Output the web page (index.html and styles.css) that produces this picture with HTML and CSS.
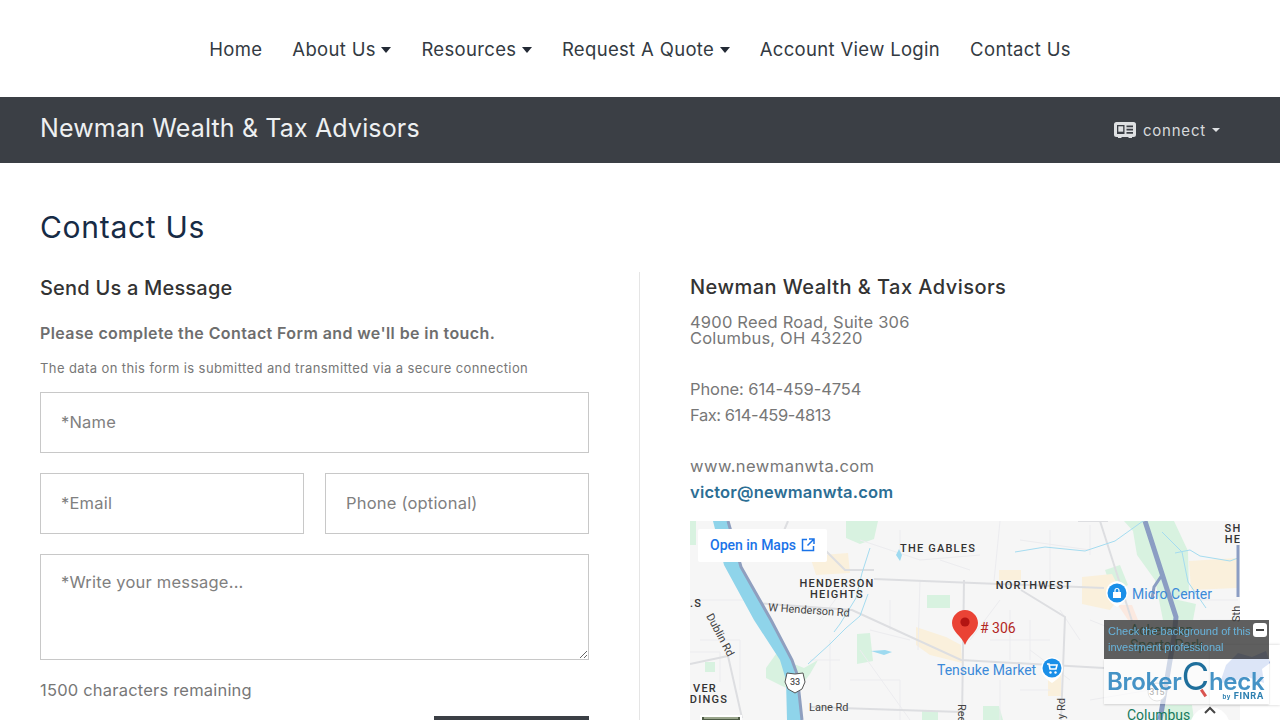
FILE: index.html
```html
<!DOCTYPE html>
<html lang="en">
<head>
    <meta charset="UTF-8">
    <meta name="viewport" content="width=device-width, initial-scale=1.0">
    <title>Contact Us - Newman Wealth &amp; Tax Advisors</title>
    <link rel="stylesheet" href="styles.css">
</head>
<body>
    <nav class="main-nav">
        <a href="#">Home</a>
        <a href="#">About Us <span class="caret"></span></a>
        <a href="#">Resources <span class="caret"></span></a>
        <a href="#">Request A Quote <span class="caret"></span></a>
        <a href="#">Account View Login</a>
        <a href="#">Contact Us</a>
    </nav>

    <header class="brand-bar">
        <div class="brand-name">Newman Wealth &amp; Tax Advisors</div>
        <div class="connect">
            <svg class="connect-icon" viewBox="0 0 22 16" width="22" height="16">
                <path fill="#dfe1e3" d="M2.500 0h17A2.500 2.500 0 0 1 22 2.500v10a2.500 2.500 0 0 1-2.500 2.500H18v1h-3.500v-1h-7v1H4v-1H2.500A2.500 2.500 0 0 1 0 12.500v-10A2.500 2.500 0 0 1 2.500 0z"/>
                <path fill="#3a3e44" d="M3 3h7.500v9H3zM12.500 3.500H19v1.800h-6.500zM12.500 6.700H19v1.800h-6.500zM12.500 9.900H19v1.800h-6.500z"/>
                <path fill="#dfe1e3" d="M4.300 4.300h4.900v5.400H4.300z"/>
            </svg>
            <span>connect</span>
            <span class="caret caret-small"></span>
        </div>
    </header>

    <main class="page">
        <h1>Contact Us</h1>
        <div class="columns">
            <section class="col-form">
                <h2>Send Us a Message</h2>
                <p class="lead">Please complete the Contact Form and we'll be in touch.</p>
                <p class="secure">The data on this form is submitted and transmitted via a secure connection</p>
                <form>
                    <input type="text" placeholder="*Name">
                    <div class="form-row">
                        <input type="text" placeholder="*Email">
                        <input type="text" placeholder="Phone (optional)">
                    </div>
                    <textarea placeholder="*Write your message..."></textarea>
                    <p class="remaining">1500 characters remaining</p>
                    <div class="form-actions"><button type="button">Submit</button></div>
                </form>
            </section>

            <section class="col-info">
                <h3>Newman Wealth &amp; Tax Advisors</h3>
                <p class="address">4900 Reed Road, Suite 306<br>Columbus, OH 43220</p>
                <p class="phone">Phone: 614-459-4754</p>
                <p class="fax">Fax: 614-459-4813</p>
                <p class="site">www.newmanwta.com</p>
                <p class="mail"><a href="#">victor@newmanwta.com</a></p>

                <div class="map">
                    <svg class="map-art" viewBox="690 521 550 300" width="550" height="300">
                        <rect x="690" y="521" width="550" height="300" fill="#f6f6f6"/>
                        <!-- parks -->
                        <g fill="#d8f2e0">
                            <path d="M846 521h32l-4 18-14 5-14-6z"/>
                            <path d="M927 595h23v13h-23z"/>
                            <path d="M857 634l13-1 3 28-16 3z"/>
                            <path d="M766 668l10-14 18 10 10 4 14-8-8 14-14 18-14-6-16-8z"/>
                            <path d="M1124 521h50l14 30 1 40-15 8 22 5-3 16h-30l-8-40-18-25-4-24z"/>
                            <path d="M1105 570l15-5 8 20-15 8z"/>
                            <path d="M922 711h16v9h-16zM983 706h16l4 14h-20z"/>
                            <path d="M705 662h10v10h-10z"/>
                            <path d="M1160 705h32l2 15h-34z"/>
                            <path d="M690 521h6v24h-6z"/>
                        </g>
                        <!-- shopping areas -->
                        <g fill="#faf0dc">
                            <path d="M810 556l38-3 2 20-34 2z"/>
                            <path d="M916 627l30 10 15 8 1 18-32-8-14-10z"/>
                            <path d="M1082 577l30-3 10 20-12 16-28-6z"/>
                            <path d="M1189 561l48-3v30l-46 2z"/>
                            <path d="M1048 673h13v23h-13z"/>
                            <path d="M999 570h22v10h-22z"/>
                            <path d="M1118 605h14l6 15h-10z" fill="#fbe9e0"/>
                        </g>
                        <!-- local streets -->
                        <g fill="none" stroke="#ececef" stroke-width="1">
                            <path d="M690 600h60M860 540l60 20 60-5M920 580l-2 70M1000 600l-30 40M1030 650l40 30M1090 620l50 20"/>
                            <path d="M1000 521l-6 60M1080 640l-20-30M860 650l50 70M1090 700l60-10M820 620l30-40M1020 540l70 10"/>
                            <path d="M700 640h40v50M690 652h30v30M850 680h50v40M870 630l40 10M890 600v30M1010 610v50M1030 620v40M990 640h60M1000 680v40M1020 690h30"/>
                            <path d="M900 530v30M940 560l30 10M1050 530v50M1090 525v30M1200 600h38M1200 620h38M830 640v50M810 660h30"/>
                        </g>
                        <!-- main roads -->
                        <g fill="none" stroke="#dddee1" stroke-width="2">
                            <path d="M874 579l230 9"/>
                            <path d="M754 603l98 7 109 50 143 8"/>
                            <path d="M964 580l-2 140"/>
                            <path d="M1021 590l44 27-4 103"/>
                            <path d="M810 707l151 5"/>
                            <path d="M690 664l38-8 14 62"/>
                            <path d="M785 560l-5-20 8-19M780 540h35l30 30h29"/>
                            <path d="M1100 521l32 100M1108 521l-30 0"/>
                        </g>
                        <!-- water and highways -->
                        <path d="M713 521h15l13 46 30 53 21 40 8 35 2 25h-15l-1-40-6-20-26-40-30-55z" fill="#8fd4ea"/>
                        <path d="M728 521l13 46 30 53 21 40 5 14 5 46" fill="none" stroke="#8f9fbf" stroke-width="3"/>
                        <path d="M1015 552l30-5 40 4 30-10 28-20M1162 532l20 20 6 30 18 26M1175 553l15-3 10 6 30 5 8-3M870 548l-8 25-6 25-16 26-6 8M808 664l22-20 16-16 14-12 8-22" fill="none" stroke="#a5dcf0" stroke-width="1"/>
                        <path d="M871 651l14-1 7 2-8 3zM896 555l3-6 3 6-2 6z" fill="#9edaf0"/>
                        <path d="M1145 521l31 96-2 20-14 83" fill="none" stroke="#8b9dc3" stroke-width="5"/>
                        <path d="M1162 575l-8 12-2 12M1238 545v52" fill="none" stroke="#8b9dc3" stroke-width="3"/>
                        <!-- road labels and neighbourhoods -->
                        <g class="area-label" text-anchor="middle">
                            <text x="938" y="552">THE GABLES</text>
                            <text x="837" y="587">HENDERSON</text>
                            <text x="837" y="598">HEIGHTS</text>
                            <text x="1034" y="589">NORTHWEST</text>
                            <text x="705" y="692">VER</text>
                            <text x="709" y="703">DINGS</text>
                            <text x="696" y="607">.S</text>
                            <text x="1233" y="532">SH</text>
                            <text x="1233" y="543">HE</text>
                        </g>
                        <g class="road-label">
                            <text x="768" y="611" transform="rotate(4 768 611)">W Henderson Rd</text>
                            <text x="706" y="616" transform="rotate(62 706 616)">Dublin Rd</text>
                            <text x="809" y="711">Lane Rd</text>
                            <text x="958" y="704" transform="rotate(90 958 704)">Reed Rd</text>
                            <text x="1065" y="719" transform="rotate(-90 1065 719)">y Rd</text>
                            <text x="1240" y="622" transform="rotate(-90 1240 622)">Sth</text>
                        </g>
                        <!-- route shields -->
                        <path d="M787 673l8 1 8-1 2 9-3 7-7 4-7-4-3-7z" fill="#fff" stroke="#555" stroke-width="1"/>
                        <text class="shield-label" x="795" y="685" text-anchor="middle">33</text>
                        <circle cx="1157" cy="692" r="9" fill="#fff" stroke="#bbb"/>
                        <text class="shield-label" x="1157" y="695" text-anchor="middle">315</text>
                        <!-- places -->
                        <path d="M1117 581a12 12 0 0 1 11 12c0 5-4 9-11 14-7-5-11-9-11-14a12 12 0 0 1 11-12z" fill="#fff"/>
                        <circle cx="1117" cy="593" r="9.500" fill="#1a8fe8"/>
                        <path d="M1113 592h8v6h-8z" fill="#fff"/>
                        <path d="M1115 592v-1.500a2 2 0 0 1 4 0v1.500" fill="none" stroke="#fff" stroke-width="1.200"/>
                        <text class="poi-label" x="1132" y="599">Micro Center</text>
                        <path d="M1052 657a12 12 0 0 1 11 12c0 5-4 9-11 14-7-5-11-9-11-14a12 12 0 0 1 11-12z" fill="#fff"/>
                        <circle cx="1052" cy="668" r="9.500" fill="#1a8fe8"/>
                        <path d="M1047 664h2l1 5h6l1-4h-7" fill="none" stroke="#fff" stroke-width="1.600"/>
                        <circle cx="1050.500" cy="672.500" r="1.200" fill="#fff"/>
                        <circle cx="1055.500" cy="672.500" r="1.200" fill="#fff"/>
                        <text class="poi-label" x="937" y="675">Tensuke Market</text>
                        <text class="park-label" x="1130" y="635">Ackerman</text>
                        <text class="park-label" x="1130" y="650">Sports Park</text>
                        <text class="columbus-label" x="1127" y="720">Columbus</text>
                        <!-- pin -->
                        <path d="M965 610c7 0 13 6 13 13 0 9-9 12-13 22-4-10-13-13-13-22 0-7 6-13 13-13z" fill="#ea4335"/>
                        <circle cx="965" cy="622" r="4.600" fill="#b31412"/>
                        <text class="pin-label" x="980" y="633"># 306</text>
                        <!-- thumbnail and pan control -->
                        <rect x="700" y="715" width="42" height="42" fill="#fff"/>
                        <rect x="702" y="717" width="38" height="38" fill="#4d5b45"/>
                        <rect x="704" y="717" width="34" height="2" fill="#9aa68c"/>
                        <circle cx="1210" cy="727" r="20" fill="#fff"/>
                        <path d="M1205 713l5-5 5 5M1199 722l-4 4M1221 722l4 4" fill="none" stroke="#444" stroke-width="2"/>
                    </svg>
                    <a class="open-maps" href="#">Open in Maps
                        <svg viewBox="0 0 14 14" width="14" height="14">
                            <path d="M6 1.500H1.500v11h11V8M8 1h5v5M13 1L6.500 7.500" fill="none" stroke="#1a73e8" stroke-width="1.500"/>
                        </svg>
                    </a>
                </div>
            </section>
        </div>
    </main>

    <div class="recaptcha-box">
        <svg viewBox="0 0 70 40" width="70" height="40">
            <path d="M10 34l6-18 12-12 14 4 14-6 4 12-8 6 2 14-16-6-14 4z" fill="#a9bdec"/>
        </svg>
    </div>

    <aside class="broker-check">
        <div class="broker-top">
            <span>Check the background of this investment professional</span>
            <button type="button" class="broker-close" aria-label="Close"></button>
        </div>
        <div class="broker-logo">
            <span class="logo-word">Broker<span class="logo-c">C</span>heck</span>
            <span class="logo-handle"></span>
            <span class="logo-finra"><small>by</small> FINRA</span>
        </div>
    </aside>
</body>
</html>
```

FILE: styles.css
```css
html, body {
    height: 720px;
    overflow: hidden;
}

body {
    margin: 0;
    font-family: 'Inter', 'Liberation Sans', sans-serif;
    color: #666;
    background-color: #fff;
}

a {
    color: inherit;
    text-decoration: none;
}

/* Navigation */
.main-nav {
    height: 97px;
    display: flex;
    justify-content: center;
    align-items: center;
    gap: 30px;
    font-size: 18.5px;
    letter-spacing: 0.33px;
    color: #333a42;
}

.caret {
    display: inline-block;
    width: 0;
    height: 0;
    vertical-align: 3px;
    border-top: 6px solid #232a35;
    border-left: 5.5px solid transparent;
    border-right: 5.5px solid transparent;
}

.caret-small {
    vertical-align: 2px;
    border-top: 4px solid #dfe1e3;
    border-left: 4.5px solid transparent;
    border-right: 4.5px solid transparent;
}

/* Brand bar */
.brand-bar {
    height: 66px;
    box-sizing: border-box;
    padding: 0 60px 4px 40px;
    display: flex;
    justify-content: space-between;
    align-items: center;
    background-color: #3b3f45;
    color: #eef0f1;
}

.brand-name {
    font-size: 25px;
    letter-spacing: 0.15px;
}

.connect {
    display: flex;
    align-items: center;
    gap: 6px;
    margin-top: 4px;
    font-size: 15px;
    letter-spacing: 0.8px;
    color: #d8dadc;
}

.connect-icon {
    margin-right: 1px;
}

/* Content */
.page {
    padding: 0 40px;
}

h1 {
    margin: 0;
    padding-top: 45px;
    height: 64px;
    font-size: 30px;
    letter-spacing: 0.7px;
    line-height: 38px;
    font-weight: 400;
    color: #172b45;
}

.columns {
    display: grid;
    grid-template-columns: 600px 600px;
}

.col-form {
    box-sizing: border-box;
    padding-right: 50px;
    border-right: 1px solid #e5e5e5;
}

.col-info {
    padding-left: 50px;
}

h2 {
    margin: 1px 0 0;
    font-size: 20px;
    letter-spacing: 0.2px;
    line-height: 30px;
    font-weight: 500;
    color: #333;
}

.lead {
    margin: 18px 0 0;
    font-size: 16px;
    letter-spacing: 0.4px;
    line-height: 24px;
    font-weight: 600;
    color: #6e6e6e;
}

.secure {
    margin: 13px 0 0;
    font-size: 13px;
    letter-spacing: 0.4px;
    line-height: 20px;
    color: #777;
}

form {
    margin-top: 14px;
    display: flex;
    flex-direction: column;
    gap: 20px;
}

input, textarea {
    box-sizing: border-box;
    width: 100%;
    padding: 0 20px;
    font-family: inherit;
    font-size: 16.5px;
    letter-spacing: 0.2px;
    color: #666;
    background-color: #fff;
    border: 1px solid #c8c8c8;
    border-radius: 0;
}

input {
    height: 61px;
    padding-bottom: 2px;
}

input::placeholder, textarea::placeholder {
    color: #808080;
}

.form-row {
    display: flex;
    gap: 21px;
}

textarea {
    display: block;
    height: 106px;
    padding-top: 17px;
}

.remaining {
    margin: 0;
    height: 16px;
    font-size: 16.5px;
    letter-spacing: 0.2px;
    line-height: 20px;
    color: #777;
}

.form-actions {
    display: flex;
    justify-content: flex-end;
}

.form-actions button {
    width: 155px;
    height: 50px;
    color: #fff;
    font-family: inherit;
    background-color: #3b3f45;
    border: none;
}

h3 {
    margin: 0;
    font-size: 20px;
    letter-spacing: 0.45px;
    line-height: 30px;
    font-weight: 500;
    color: #333;
}

.col-info p {
    font-size: 16.5px;
    color: #777;
}

.col-info .address {
    margin: 12px 0 0;
    letter-spacing: 0.2px;
    line-height: 16px;
}

.col-info .phone {
    margin: 30px 0 0;
    letter-spacing: -0.1px;
    line-height: 26px;
}

.col-info .fax {
    margin: 0;
    letter-spacing: -0.45px;
    line-height: 26px;
}

.col-info .site {
    margin: 25px 0 0;
    letter-spacing: 0.45px;
    line-height: 26px;
}

.col-info .mail {
    margin: 0;
    letter-spacing: 0.2px;
    line-height: 26px;
    font-weight: 600;
    color: #2c6e94;
}

/* Map */
.map {
    position: relative;
    margin-top: 16px;
    width: 550px;
    height: 300px;
}

.map-art {
    display: block;
}

.area-label text {
    font: 500 11px 'Roboto', sans-serif;
    letter-spacing: 1.2px;
    fill: #333;
}

.road-label text {
    font: 400 11px 'Roboto', sans-serif;
    fill: #444;
}

.shield-label {
    font: 500 9px 'Roboto', sans-serif;
    fill: #555;
}

.poi-label {
    font: 400 14px 'Roboto', sans-serif;
    fill: #3b8ad9;
}

.park-label {
    font: 400 14px 'Roboto', sans-serif;
    fill: #137333;
}

.columbus-label {
    font: 400 14px 'Roboto', sans-serif;
    fill: #177a5c;
}

.pin-label {
    font: 400 14px 'Roboto', sans-serif;
    fill: #b3261e;
}

.open-maps {
    position: absolute;
    left: 8px;
    top: 8px;
    display: flex;
    align-items: center;
    gap: 5px;
    padding: 0 12px 2px;
    height: 33px;
    box-sizing: border-box;
    font: 500 14px 'Roboto', sans-serif;
    color: #1a73e8;
    background-color: #fff;
    border-radius: 2px;
}

/* BrokerCheck widget */
.recaptcha-box {
    position: fixed;
    left: 1210px;
    top: 645px;
    width: 70px;
    height: 60px;
    padding-top: 4px;
    box-sizing: border-box;
    background-color: rgba(255, 255, 255, 0.85);
    box-shadow: 0 0 3px rgba(0, 0, 0, 0.2);
}

.broker-check {
    position: fixed;
    left: 1104px;
    top: 620px;
    width: 165px;
    height: 84px;
}

.broker-top {
    position: relative;
    height: 39px;
    box-sizing: border-box;
    padding: 3px 4px;
    font: 11px/16px 'Liberation Sans', sans-serif;
    color: #68b4dc;
    background-color: rgba(60, 60, 60, 0.82);
}

.broker-top span {
    display: block;
    width: 146px;
}

.broker-close {
    position: absolute;
    top: 3px;
    right: 2px;
    width: 14px;
    height: 14px;
    padding: 0;
    background-color: #fff;
    border: none;
    border-radius: 3px;
}

.broker-close::after {
    content: "";
    display: block;
    height: 2px;
    margin: 0 3px;
    background-color: #444;
}

.broker-logo {
    height: 45px;
    position: relative;
    background-color: rgba(255, 255, 255, 0.6);
    box-shadow: 0 1px 2px rgba(0, 0, 0, 0.15);
    overflow: hidden;
}

.logo-word {
    position: absolute;
    left: 3px;
    top: 3px;
    font: 600 24px/32px 'Inter', sans-serif;
    letter-spacing: -0.3px;
    color: #4593c6;
}

.logo-c {
    font-size: 38px;
    font-weight: 400;
    line-height: 28px;
    color: #1f6f9c;
}

.logo-handle {
    position: absolute;
    left: 98px;
    top: 30px;
    width: 3px;
    height: 8px;
    background-color: #d9534f;
    transform: rotate(-35deg);
}

.logo-finra {
    position: absolute;
    right: 5px;
    bottom: 2px;
    font: 700 9px/10px 'Inter', sans-serif;
    letter-spacing: 0.6px;
    color: #2c7fb0;
}

.logo-finra small {
    font-size: 6px;
}
```
